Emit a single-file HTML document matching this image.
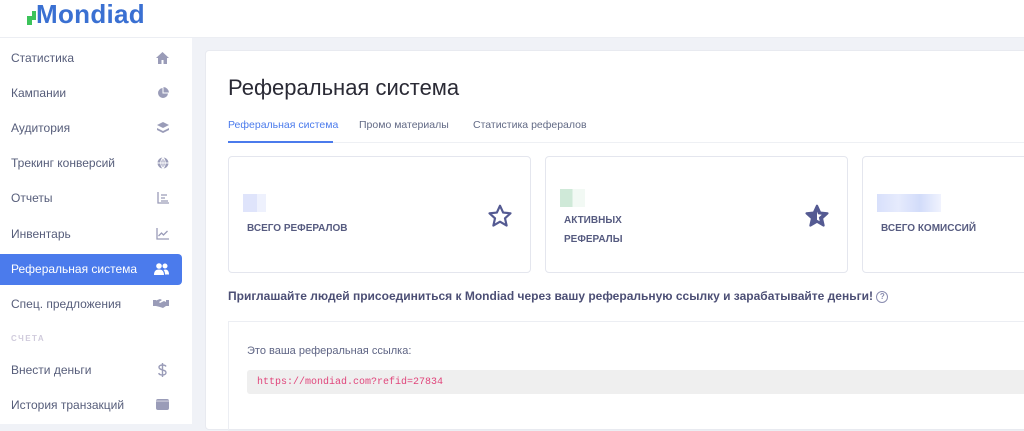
<!DOCTYPE html>
<html><head><meta charset="utf-8"><style>
*{margin:0;padding:0;box-sizing:border-box}
body{width:1024px;height:424px;overflow:hidden;font-family:"Liberation Sans","DejaVu Sans",sans-serif;background:#f0f2f7;position:relative}
.hdr{position:absolute;left:0;top:0;width:1024px;height:38px;background:#fff;border-bottom:1px solid #eceef3}
.logo{position:absolute;left:36px;top:-1px;font-size:26px;font-weight:bold;color:#3a70d2;letter-spacing:0.3px}
.side{position:absolute;left:0;top:38px;width:192px;height:386px;background:#fff}
.it{position:absolute;left:0;width:182px;height:31px;font-size:12px;color:#565d7a;padding-left:11px;line-height:31px}
.it svg{position:absolute;right:13px;top:9px}
.act{background:#4b7bec;color:#fff;border-radius:0 4px 4px 0}
.cap{position:absolute;left:11px;font-size:8px;color:#d0cbdc;letter-spacing:1.5px;font-weight:bold}
.main{position:absolute;left:205px;top:50px;width:830px;height:380px;background:#fff;border-radius:4px;border:1px solid #e8eaf0}
h1{position:absolute;left:228px;top:75px;font-size:22px;font-weight:normal;color:#2a2a35}
.tabs{position:absolute;left:228px;top:119px;font-size:10.5px;color:#626a85}
.tabs span{position:absolute;white-space:nowrap}
.tline{position:absolute;left:228px;top:142px;width:800px;height:1px;background:#eef0f4}
.uline{position:absolute;left:228px;top:141px;width:105px;height:2px;background:#4b7bec}
.card{position:absolute;top:156px;height:117px;width:303px;border:1px solid #e4e6ee;border-radius:4px;background:#fff}
.lbl{position:absolute;font-size:10px;font-weight:bold;color:#565b80;line-height:19px}
.blur{position:absolute;height:18px}
.inv{position:absolute;left:228px;top:289px;font-size:12px;font-weight:bold;color:#4c4f75}
.box{position:absolute;left:228px;top:321px;width:800px;height:110px;border:1px solid #eceef3}
.code{position:absolute;left:247px;top:370px;width:780px;height:24px;background:#efefef;border-radius:3px;font-family:"Liberation Mono",monospace;font-size:10px;color:#e0457b;padding:7px 10px}
</style></head><body>
<div class="hdr">
<svg style="position:absolute;left:27px;top:11px" width="14" height="14" viewBox="0 0 14 14"><path d="M5 0h4v5h-4zM0 5h9v4h-4v5h-5z" fill="#3cc35a"/></svg>
<div class="logo">Mondiad</div></div>
<div class="side">
<div class="it" style="top:5px">Статистика<svg width="13" height="12" viewBox="0 0 13 12"><path d="M6.5 0L0 6h2v6h3.5V8h2v4H11V6h2z" fill="#9a9cb8"/></svg></div>
<div class="it" style="top:40px">Кампании<svg width="12" height="12" viewBox="0 0 12 12"><path d="M5.5 1A5 5 0 1 0 11 6.5H5.5z M6.5 0v5.5H12A6 6 0 0 0 6.5 0z" fill="#9a9cb8"/></svg></div>
<div class="it" style="top:75px">Аудитория<svg width="12" height="12" viewBox="0 0 12 12"><path d="M6 0l6 3-6 3-6-3z M0 6l6 3 6-3v2l-6 3-6-3z" fill="#9a9cb8"/></svg></div>
<div class="it" style="top:110px">Трекинг конверсий<svg width="12" height="12" viewBox="0 0 12 12"><circle cx="6" cy="6" r="5.5" fill="#9a9cb8"/><path d="M0.5 6h11M6 .5v11M6 .5c-3 3-3 8 0 11M6 .5c3 3 3 8 0 11" stroke="#fff" stroke-width="0.9" fill="none"/></svg></div>
<div class="it" style="top:145px">Отчеты<svg width="12" height="12" viewBox="0 0 12 12"><path d="M1 0v11h11" stroke="#9a9cb8" stroke-width="1.3" fill="none"/><path d="M4 3h6M4 6h4M4 9h7" stroke="#9a9cb8" stroke-width="1.3"/></svg></div>
<div class="it" style="top:181px">Инвентарь<svg width="13" height="12" viewBox="0 0 13 12"><path d="M1 0v11h12" stroke="#9a9cb8" stroke-width="1.3" fill="none"/><path d="M2.5 8l3-3 2 2 4-4" stroke="#9a9cb8" stroke-width="1.3" fill="none"/></svg></div>
<div class="it act" style="top:216px">Реферальная система<svg width="15" height="12" viewBox="0 0 15 12"><circle cx="5" cy="3" r="2.8" fill="#fff"/><circle cx="11" cy="3" r="2.5" fill="#fff"/><path d="M0 12c0-4 2-5.5 5-5.5S10 8 10 12z M11 6.5c2.5 0 4 1.5 4 5h-4c0-2-.5-3.5-1.5-4.5z" fill="#fff"/></svg></div>
<div class="it" style="top:251px">Спец. предложения<svg width="16" height="11" viewBox="0 0 16 11"><path d="M0 2h3v6H0z M13 2h3v6h-3z M3 2.5l4-1.5 2 1-3 2 1 1 4-2 2 1v4l-3 2-3-1-4-1z" fill="#9a9cb8"/></svg></div>
<div class="cap" style="top:296px">СЧЕТА</div>
<div class="it" style="top:317px">Внести деньги<svg width="9" height="14" viewBox="0 0 9 14" style="top:8px;right:15px"><path d="M8 3.5C7.5 2.5 6 2 4.5 2S1 2.7 1 4.3c0 3.4 7 1.8 7 5.2C8 11 6.5 12 4.5 12S1 11.3.8 10M4.5 0v14" stroke="#9a9cb8" stroke-width="1.4" fill="none"/></svg></div>
<div class="it" style="top:352px">История транзакций<svg width="13" height="11" viewBox="0 0 13 11"><rect x="0" y="0" width="13" height="11" rx="2" fill="#9a9cb8"/><rect x="0" y="1.5" width="13" height="1.2" fill="#fff" opacity=".5"/></svg></div>
</div>
<div class="main"></div>
<h1>Реферальная система</h1>
<div class="tabs"><span style="left:0;color:#4b7bec">Реферальная система</span><span style="left:131px">Промо материалы</span><span style="left:245px">Статистика рефералов</span></div>
<div class="tline"></div><div class="uline"></div>
<div class="card" style="left:228px">
<div class="blur" style="left:14px;top:37px;width:23px;background:linear-gradient(90deg,#dfe4fb 60%,#eef1fd 60%)"></div>
<div class="lbl" style="left:18px;top:62px">ВСЕГО РЕФЕРАЛОВ</div>
<svg style="position:absolute;left:258px;top:46px" width="26" height="26" viewBox="0 0 24 24"><path d="M12 2.5l2.9 6.3 6.8.7-5.1 4.6 1.5 6.7L12 17.3l-6.1 3.5 1.5-6.7-5.1-4.6 6.8-.7z" fill="none" stroke="#545a92" stroke-width="2" stroke-linejoin="round"/></svg>
</div>
<div class="card" style="left:545px">
<div class="blur" style="left:14px;top:32px;width:25px;background:linear-gradient(90deg,#cfe9d8 50%,#f2f9f4 50%)"></div>
<div class="lbl" style="left:18px;top:54px">АКТИВНЫХ<br>РЕФЕРАЛЫ</div>
<svg style="position:absolute;left:258px;top:46px" width="26" height="26" viewBox="0 0 24 24"><path d="M12 2.5l2.9 6.3 6.8.7-5.1 4.6 1.5 6.7L12 17.3l-6.1 3.5 1.5-6.7-5.1-4.6 6.8-.7z" fill="#545a92" stroke="#545a92" stroke-width="2" stroke-linejoin="round"/><path d="M12 8v7.5l2.5 1.4-.8-3.6 2.7-2.5-3.4-.4z" fill="#fff"/></svg>
</div>
<div class="card" style="left:862px;width:170px">
<div class="blur" style="left:14px;top:37px;width:64px;background:linear-gradient(90deg,#d8e0fb,#e6ebfd,#d2dcfa,#f0f3fe)"></div>
<div class="lbl" style="left:18px;top:62px">ВСЕГО КОМИССИЙ</div>
</div>
<div class="inv">Приглашайте людей присоединиться к Mondiad через вашу реферальную ссылку и зарабатывайте деньги! <span style="display:inline-block;width:12px;height:12px;border:1px solid #8a8db0;border-radius:50%;font-size:8px;text-align:center;line-height:10px;color:#8a8db0;vertical-align:1px">?</span></div>
<div class="box"></div>
<div style="position:absolute;left:247px;top:345px;font-size:11px;color:#5e6484">Это ваша реферальная ссылка:</div>
<div class="code">https://mondiad.com?refid=27834</div>
</body></html>
